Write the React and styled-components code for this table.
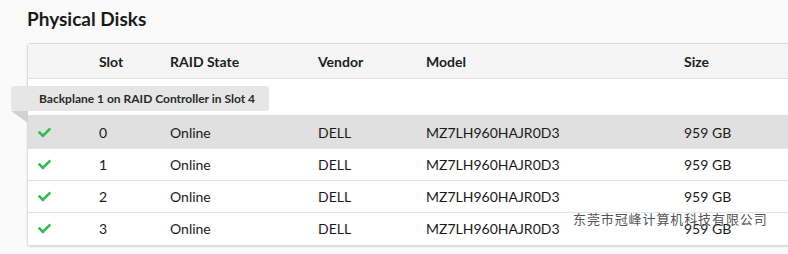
import styled, { createGlobalStyle } from "styled-components";

const GlobalStyle = createGlobalStyle`
  body {
    margin: 0;
    background: #fafafa;
    font-family: Lato, "Noto Sans", sans-serif;
    color: #222;
    overflow: hidden;
  }
`;

const disks = [
  { slot: 0, state: "Online", vendor: "DELL", model: "MZ7LH960HAJR0D3", size: "959 GB" },
  { slot: 1, state: "Online", vendor: "DELL", model: "MZ7LH960HAJR0D3", size: "959 GB" },
  { slot: 2, state: "Online", vendor: "DELL", model: "MZ7LH960HAJR0D3", size: "959 GB" },
  { slot: 3, state: "Online", vendor: "DELL", model: "MZ7LH960HAJR0D3", size: "959 GB" },
];

const Page = styled.div`
  position: relative;
  padding: 6px 0 0 27px;
  height: 254px;
  box-sizing: border-box;
`;

const Title = styled.h2`
  margin: 0 0 12px;
  font-size: 19px;
  font-weight: 700;
  line-height: 25px;
  color: #1a1a1a;
`;

const Card = styled.div`
  position: relative;
  width: 800px;
  background: #fff;
  border: 1px solid #dcdcdc;
  border-radius: 3px;
  box-shadow: 0 1px 2px rgba(0, 0, 0, 0.12);
`;

const Table = styled.table`
  width: 100%;
  border-collapse: collapse;
  table-layout: fixed;
  font-size: 14px;
`;

const HeadCell = styled.th`
  width: ${(p) => p.$w || "auto"};
  height: 34px;
  padding: 0;
  text-align: left;
  font-weight: 700;
  color: #1e1e1e;
  background: #f5f5f5;
  border-bottom: 1px solid #e0e0e0;
`;

const GroupRow = styled.tr`
  height: 37px;
  border-bottom: 1px solid #e0e0e0;
`;

const Row = styled.tr`
  height: ${(p) => (p.$active ? "33px" : "32px")};
  background: ${(p) => (p.$active ? "#e0e0e0" : "#fff")};
  border-bottom: ${(p) => (p.$last ? "none" : "1px solid #e5e5e5")};
`;

const Cell = styled.td`
  padding: 0;
  color: #1a1a1a;
  padding-left: ${(p) => p.$pad || 0};
`;

const Banner = styled.div`
  position: absolute;
  left: -17px;
  top: 42px;
  width: 258px;
  height: 25px;
  padding-left: 28px;
  box-sizing: border-box;
  display: flex;
  align-items: center;
  background: #e6e6e6;
  border-radius: 3px;
  font-size: 12px;
  font-weight: 700;
  color: #2a2a2a;
  white-space: nowrap;
`;

// folded corner under the left end of the banner
const Fold = styled.div`
  position: absolute;
  left: -17px;
  top: 67px;
  width: 0;
  height: 0;
  border-top: 12px solid #d2d2d2;
  border-left: 17px solid transparent;
`;

const Stamp = styled.div`
  position: absolute;
  left: 573px;
  top: 209px;
  font-family: "Noto Sans CJK SC", sans-serif;
  font-size: 13px;
  letter-spacing: 0.9px;
  color: #555;
  white-space: nowrap;
`;

const Check = () => (
  <svg width="13" height="11" viewBox="0 0 512 400" style={{ display: "block" }}>
    <path
      fill="#2ebd4e"
      d="M173.9 389.8L7.5 223.4c-10-10-10-26.2 0-36.2l36.2-36.2c10-10 26.2-10 36.2 0L192 263.1 432.1 23c10-10 26.2-10 36.2 0l36.2 36.2c10 10 10 26.2 0 36.2L210.1 389.8c-10 10-26.2 10-36.2 0z"
    />
  </svg>
);

export default function App() {
  return (
    <>
      <GlobalStyle />
      <Page>
        <Title>Physical Disks</Title>
        <Card>
          <Table>
            <thead>
              <tr>
                <HeadCell $w="71px" />
                <HeadCell $w="71px">Slot</HeadCell>
                <HeadCell $w="148px">RAID State</HeadCell>
                <HeadCell $w="108px">Vendor</HeadCell>
                <HeadCell $w="258px">Model</HeadCell>
                <HeadCell>Size</HeadCell>
              </tr>
            </thead>
            <tbody>
              <GroupRow>
                <td colSpan={6} />
              </GroupRow>
              {disks.map((d, i) => (
                <Row key={d.slot} $active={i === 0} $last={i === disks.length - 1}>
                  <Cell $pad="10px">
                    <Check />
                  </Cell>
                  <Cell>{d.slot}</Cell>
                  <Cell>{d.state}</Cell>
                  <Cell>{d.vendor}</Cell>
                  <Cell>{d.model}</Cell>
                  <Cell>{d.size}</Cell>
                </Row>
              ))}
            </tbody>
          </Table>
          <Banner>Backplane 1 on RAID Controller in Slot 4</Banner>
          <Fold />
        </Card>
        <Stamp>东莞市冠峰计算机科技有限公司</Stamp>
      </Page>
    </>
  );
}
